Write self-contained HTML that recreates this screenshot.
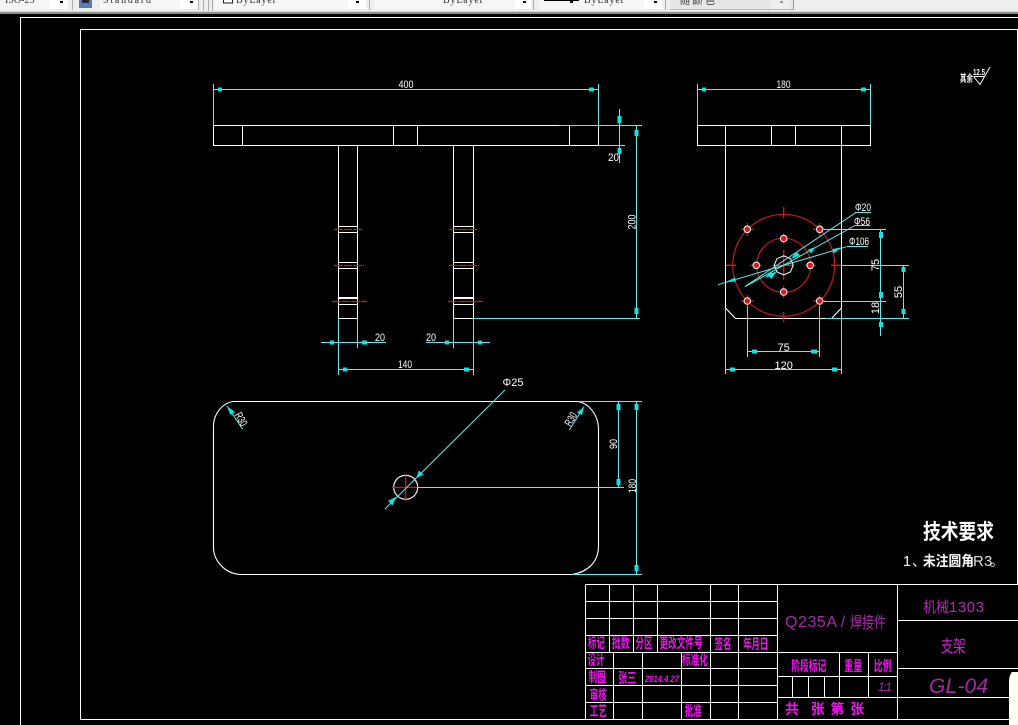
<!DOCTYPE html>
<html><head><meta charset="utf-8"><title>CAD</title>
<style>
html,body{margin:0;padding:0;background:#000;width:1018px;height:725px;overflow:hidden}
svg{display:block}
text{font-family:"Liberation Sans","WenQuanYi Zen Hei","Noto Sans CJK SC",sans-serif}
.d{fill:#fff;font-size:11px;text-anchor:middle}
.m{fill:#f014f0;text-anchor:middle;font-size:14px;font-weight:bold}
.t{fill:#a828a8;text-anchor:middle}
.b{fill:#333;font-size:10px;font-family:"Liberation Serif",serif}
</style></head><body>
<svg width="1018" height="725" viewBox="0 0 1018 725" xmlns="http://www.w3.org/2000/svg">
<rect width="1018" height="725" fill="#000"/>
<!-- toolbar -->
<g shape-rendering="crispEdges">
<rect width="1018" height="12" fill="#eeeeec"/>
<rect y="11" width="1018" height="1" fill="#d8d8d8"/>
<rect y="12" width="1018" height="2" fill="#8e8e8e"/>
<rect x="0" y="0" width="68" height="9" fill="#f6f6f6"/>
<rect x="50" y="0" width="18" height="9" fill="#fff"/>
<rect x="72" y="0" width="1" height="10" fill="#aaa"/>
<rect x="79" y="0" width="13" height="8" fill="#5c7cb8"/><rect x="82" y="0" width="7" height="3" fill="#223"/>
<rect x="100" y="0" width="98" height="9" fill="#f6f6f6"/><rect x="180" y="0" width="18" height="9" fill="#fff"/>
<rect x="198" y="0" width="1" height="10" fill="#aaa"/>
<rect x="203" y="0" width="1" height="11" fill="#aaa"/><rect x="208" y="0" width="1" height="11" fill="#aaa"/><rect x="212" y="0" width="1" height="11" fill="#aaa"/>
<rect x="214" y="0" width="152" height="9" fill="#f6f6f6"/><rect x="348" y="0" width="18" height="9" fill="#fff"/>
<rect x="223.5" y="-2" width="9" height="5" fill="#fff" stroke="#222"/>
<rect x="369" y="0" width="1" height="10" fill="#aaa"/>
<rect x="374" y="0" width="157" height="9" fill="#f6f6f6"/><rect x="515" y="0" width="16" height="9" fill="#fff"/>
<rect x="533" y="0" width="1" height="10" fill="#aaa"/>
<rect x="539" y="0" width="123" height="9" fill="#f6f6f6"/><rect x="644" y="0" width="18" height="9" fill="#fff"/>
<rect x="544" y="0" width="35" height="1" fill="#000"/>
<rect x="665" y="0" width="1" height="10" fill="#aaa"/>
<rect x="671" y="0" width="122" height="9" fill="#e6e6e6"/><rect x="770" y="0" width="20" height="9" fill="#eeeeee"/>
<rect x="670" y="9" width="124" height="1" fill="#b8b8b8"/><rect x="793" y="0" width="1" height="10" fill="#999"/>
<rect x="60" y="1" width="3" height="2" fill="#111"/><rect x="570" y="1" width="3" height="2" fill="#111"/>
<rect x="190" y="1" width="3" height="2" fill="#111"/><rect x="356" y="1" width="3" height="2" fill="#111"/>
<rect x="523" y="1" width="3" height="2" fill="#111"/><rect x="654" y="1" width="3" height="2" fill="#111"/>
<rect x="780" y="1" width="3" height="2" fill="#999"/>
</g>
<text class="b" x="5" y="3">ISO-25</text>
<text class="b" x="103" y="3" textLength="48">Standard</text>
<text class="b" x="236" y="3" textLength="40">ByLayer</text>
<text class="b" x="443" y="3" textLength="40">ByLayer</text>
<text class="b" x="584" y="3" textLength="40">ByLayer</text>
<text class="b" x="680" y="4" fill="#555" textLength="35" style="font-family:'WenQuanYi Zen Hei',sans-serif">随颜色</text>

<!-- white geometry -->
<g fill="none" stroke="#fff" stroke-width="1" shape-rendering="crispEdges">
<path d="M20.5 17V725M20 17.5H1018"/>
<path d="M80.5 719.5V29.5H1017.5V584M80.5 719.5H1009"/>
<rect x="213.5" y="125.5" width="385" height="20"/>
<path d="M242.5 125V145M393.5 125V145M417.5 125V145M569.5 125V145"/>
<path d="M338.5 145V318.5H357.5V145M453.5 145V318.5H473.5V145"/>
<path d="M338 226.5H358M338 232.5H358M338 262.5H358M338 268.5H358M338 297.5H358M338 298.5H358M338 304.5H358"/>
<path d="M453 226.5H474M453 232.5H474M453 262.5H474M453 268.5H474M453 297.5H474M453 298.5H474M453 304.5H474"/>
<rect x="697.5" y="125.5" width="173" height="20"/>
<path d="M725.5 125V308M771.5 125V145M795.5 125V145M841.5 125V308M735 318.5H825"/>
<!-- title block -->
<path d="M585.5 584.5H1018M585.5 584.5V719M585.5 601.5H777M585.5 618.5H777M585.5 635.5H777M585.5 652.5H897M585.5 668.5H777M585.5 685.5H777M585.5 702.5H777"/>
<path d="M609.5 584V652M633.5 584V652M657.5 584V652M710.5 584V719M738.5 584V719M777.5 584V719M613.5 652V719M642.5 652V719M681.5 652V719"/>
<path d="M897.5 584V719M897 620.5H1018M897 668.5H1018M777 676.5H897M777 697.5H1009M839.5 652V697M868.5 652V697M792.5 676V697M808.5 676V697M824.5 676V697"/>
</g>
<g fill="none" stroke="#fff" stroke-width="1.1">
<path d="M725.5 308L735 318M832 318L841.5 308"/>
<path d="M233 401.5H578C588 403 598 414 598.5 428V547C598 562 588 572 572 574.5H241C226 574 214 562 213.5 548V425C214 414 222 403 233 401.5Z"/>
<circle cx="405.7" cy="487.3" r="12"/>
</g>
<!-- red -->
<g fill="none" stroke="#c01c1c" stroke-width="1.2">
<path d="M334 229.5H362M449 229.5H478M334 265.5H364M449 265.5H479M332 301.5H367M448 301.5H483" stroke-dasharray="9 1 8 1" stroke="#c02020" stroke-width="1.3"/>
<circle cx="783.7" cy="265.3" r="51"/>
<circle cx="783.7" cy="265.3" r="27"/>
<path d="M726 265.3H736M831 265.3H841.5M783.7 207V218M783.7 312V322M773 265.3H794M783.7 250V280" stroke-width="1.3" stroke="#e01818"/>
<path d="M783.7 233V244M783.7 286V298M750 265.3H762M805 265.3H816M741 229.3H754M747.3 223V236M813 229.3H826M819.7 223V236M741 301H754M747.3 295V308M813 301H826M819.7 295V308" stroke="#c81818"/>
<path d="M392 487.3H419M405.7 474V501" stroke="#e01818"/>
</g>
<g fill="#d81c1c" stroke="#fff" stroke-width="1">
<circle cx="783.7" cy="238.5" r="3.3"/><circle cx="783.7" cy="292" r="3.3"/>
<circle cx="756.3" cy="265.3" r="3.3"/><circle cx="810.3" cy="265.3" r="3.3"/>
<circle cx="747.3" cy="229.3" r="3.3"/><circle cx="819.7" cy="229.3" r="3.3"/>
<circle cx="747.3" cy="301" r="3.3"/><circle cx="819.7" cy="301" r="3.3"/>
</g>
<polygon points="774.2,265.3 777,258.6 783.7,255.8 790.4,258.6 793.2,265.3 790.4,272 783.7,274.8 777,272" fill="none" stroke="#fff"/>
<!-- cyan lines -->
<g fill="none" stroke="#60eaea" stroke-width="1" shape-rendering="crispEdges">
<path d="M213.5 84V125M598.5 84V125M213 89.5H599"/>
<path d="M697.5 84V125M870.5 84V125M697 89.5H871"/>
<path d="M619.5 109V163M559 125.5H642M598 145.5H625M636.5 125V318M473 318.5H640"/>
<path d="M338.5 318V375M357.5 318V348M453.5 318V348M473.5 318V375M321 342.5H386M426 342.5H490M338 369.5H474"/>
<path d="M725.5 308V374M841.5 308V374M747.5 306V357M819.5 306V357M725 369.5H842M747 351.5H820"/>
<path d="M824 229.5H886M824 301.5H886M841 265.5H909M825 318.5H909M880.5 229V336M903.5 265V318"/>
<path d="M578 401.5H642M572 574.5H642M417 487.5H624M618.5 401V487M636.5 401V574"/>
<path d="M855 212.5H871M855 225.5H870M847 246.5H868"/>
</g>
<g fill="none" stroke="#60eaea" stroke-width="1">
<path d="M855.7 212.7L745 286.5"/>
<path d="M855 225.5L745 286.7"/>
<path d="M846.7 246.7L718 284.7"/>
<path d="M505 390L385 509"/>
<path d="M227 406L242.7 429.3"/>
<path d="M584 406.7L569.3 430"/>
</g>
<!-- cyan arrows -->
<g fill="#10e4e4" shape-rendering="crispEdges">
<rect x="218" y="87.5" width="4" height="4"/><rect x="589" y="87.5" width="5" height="4"/>
<rect x="702" y="87.5" width="4" height="4"/><rect x="861" y="87.5" width="5" height="4"/>
<rect x="617.5" y="116" width="4" height="7"/><rect x="617.5" y="148" width="4" height="6"/>
<rect x="634.5" y="130" width="4" height="6"/><rect x="634.5" y="308" width="4" height="6"/>
<rect x="330" y="340.5" width="4" height="4"/><rect x="362" y="340.5" width="5" height="4"/>
<rect x="445" y="340.5" width="4" height="4"/><rect x="478" y="340.5" width="4" height="4"/>
<rect x="343" y="367.5" width="4" height="4"/><rect x="464" y="367.5" width="5" height="4"/>
<rect x="752" y="349.5" width="5" height="4"/><rect x="811" y="349.5" width="6" height="4"/>
<rect x="730" y="367.5" width="5" height="4"/><rect x="832" y="367.5" width="5" height="4"/>
<rect x="879" y="232" width="4" height="6"/><rect x="879" y="292" width="4" height="6"/><rect x="879" y="322" width="4" height="5"/>
<rect x="901.5" y="267" width="4" height="5"/><rect x="901.5" y="309" width="4" height="5"/>
<rect x="616.5" y="404" width="4" height="6"/><rect x="616.5" y="479" width="4" height="6"/>
<rect x="634.5" y="404" width="4" height="6"/><rect x="634.5" y="565" width="4" height="6"/>
</g>
<g fill="#10e4e4">
<polygon points="841.7,247.3 832.5,249 833.5,253.5"/>
<polygon points="725,282.3 735,277.5 736,281.5"/>
<polygon points="816,246.7 808,249.5 811,253.5"/>
<polygon points="765,277.7 771,271.5 774,275"/>
<polygon points="790.7,259 796.5,251.5 800,255.5"/>
<polygon points="777,271 768,275 771.5,279"/>
<polygon points="416,478.3 419,470.5 423.5,474.5"/>
<polygon points="396,496.7 388,501 392.5,505.5"/>
<polygon points="226.7,405.7 235,412 230.5,415"/>
<polygon points="584,406.7 582,415 577,412.5"/>
</g>
<!-- dim text -->
<text class="d" x="406" y="88" textLength="15" lengthAdjust="spacingAndGlyphs">400</text>
<text class="d" x="783.5" y="88" textLength="14" lengthAdjust="spacingAndGlyphs">180</text>
<text class="d" x="613.5" y="161" textLength="11" lengthAdjust="spacingAndGlyphs">20</text>
<text class="d" transform="translate(635.5 222) rotate(-90)" textLength="15" lengthAdjust="spacingAndGlyphs">200</text>
<text class="d" x="380" y="341" textLength="10" lengthAdjust="spacingAndGlyphs">20</text>
<text class="d" x="431" y="341" textLength="10" lengthAdjust="spacingAndGlyphs">20</text>
<text class="d" x="405" y="368" textLength="14" lengthAdjust="spacingAndGlyphs">140</text>
<text class="d" x="783.7" y="351">75</text>
<text class="d" x="783.7" y="369">120</text>
<text class="d" x="863" y="211" textLength="16" lengthAdjust="spacingAndGlyphs">&#934;20</text>
<text class="d" x="862" y="225" textLength="16" lengthAdjust="spacingAndGlyphs">&#934;56</text>
<text class="d" x="859" y="245" textLength="20" lengthAdjust="spacingAndGlyphs">&#934;106</text>
<text class="d" transform="translate(879 265) rotate(-90)">75</text>
<text class="d" transform="translate(879 308) rotate(-90)">18</text>
<text class="d" transform="translate(902 292) rotate(-90)">55</text>
<text class="d" x="513" y="386">&#934;25</text>
<text class="d" transform="translate(617 444) rotate(-90)" textLength="10" lengthAdjust="spacingAndGlyphs">90</text>
<text class="d" transform="translate(636 486) rotate(-90)" textLength="14" lengthAdjust="spacingAndGlyphs">180</text>
<text class="d" transform="translate(238 421) rotate(60)" textLength="14" lengthAdjust="spacingAndGlyphs">R30</text>
<text class="d" transform="translate(574 421) rotate(-60)" textLength="14" lengthAdjust="spacingAndGlyphs">R30</text>
<!-- surface mark -->
<text x="960" y="82" fill="#fff" font-size="10" font-weight="bold" textLength="13" lengthAdjust="spacingAndGlyphs">其余</text>
<text x="973" y="75" fill="#fff" font-size="8" font-weight="bold" textLength="12" lengthAdjust="spacingAndGlyphs">12.5</text>
<path d="M973.5 76.5H985M974 77L980 84.5L990 67" fill="none" stroke="#fff" stroke-width="1"/>
<!-- requirements -->
<text x="958.5" y="539" fill="#fff" font-size="21" font-weight="bold" text-anchor="middle" textLength="71" lengthAdjust="spacingAndGlyphs">技术要求</text>
<text x="903" y="566" fill="#fff" font-size="15" textLength="8" lengthAdjust="spacingAndGlyphs">1</text>
<text x="912" y="566" fill="#fff" font-size="14" style="font-family:'Noto Sans CJK SC',sans-serif">、</text>
<text x="923" y="566" fill="#fff" font-size="14" font-weight="bold" textLength="51" lengthAdjust="spacingAndGlyphs">未注圆角</text>
<text x="973" y="566" fill="#ddd" font-size="15">R</text>
<text x="984" y="566" fill="#ddd" font-size="15">3</text>
<text x="990" y="566" fill="#ddd" font-size="14" style="font-family:'Noto Sans CJK SC',sans-serif">。</text>
<!-- title text -->
<text class="m" x="596.5" y="648" textLength="17" lengthAdjust="spacingAndGlyphs">标记</text>
<text class="m" x="620.7" y="648" textLength="18" lengthAdjust="spacingAndGlyphs">批数</text>
<text class="m" x="644" y="648" textLength="17" lengthAdjust="spacingAndGlyphs">分区</text>
<text class="m" x="681" y="648" textLength="43" lengthAdjust="spacingAndGlyphs">更改文件号</text>
<text class="m" x="723" y="649" textLength="17" lengthAdjust="spacingAndGlyphs">签名</text>
<text class="m" x="755.7" y="649" textLength="25" lengthAdjust="spacingAndGlyphs">年月日</text>
<text class="m" x="596" y="665" textLength="17" lengthAdjust="spacingAndGlyphs">设计</text>
<text class="m" x="695" y="665" textLength="26" lengthAdjust="spacingAndGlyphs">标准化</text>
<text class="m" x="597.3" y="682" textLength="17" lengthAdjust="spacingAndGlyphs">制图</text>
<text class="m" x="627.3" y="683" textLength="18" lengthAdjust="spacingAndGlyphs">张三</text>
<text class="m" x="662" y="682" style="font-size:9px" font-style="italic" textLength="34" lengthAdjust="spacingAndGlyphs">2014.4.27</text>
<text class="m" x="598.3" y="700" textLength="17" lengthAdjust="spacingAndGlyphs">审核</text>
<text class="m" x="598.3" y="716" textLength="17" lengthAdjust="spacingAndGlyphs">工艺</text>
<text class="m" x="693.3" y="716" textLength="17" lengthAdjust="spacingAndGlyphs">批准</text>
<text class="t" x="785" y="627" style="text-anchor:start" font-size="16" textLength="52">Q235A</text>
<text class="t" x="843" y="627" font-size="16">/</text>
<text class="t" x="850" y="628" style="text-anchor:start" font-size="16" textLength="36" lengthAdjust="spacingAndGlyphs">焊接件</text>
<text class="t" x="923" y="612" style="text-anchor:start;fill:#b828b8" font-size="15" textLength="26" lengthAdjust="spacingAndGlyphs">机械</text>
<text class="t" x="949" y="612" style="text-anchor:start;fill:#b828b8" font-size="15" textLength="35">1303</text>
<text class="t" x="953.3" y="652" font-size="17" textLength="25" lengthAdjust="spacingAndGlyphs" style="fill:#c828c8">支架</text>
<text class="m" x="808.7" y="671" textLength="35" lengthAdjust="spacingAndGlyphs">阶段标记</text>
<text class="m" x="853.3" y="671" textLength="18" lengthAdjust="spacingAndGlyphs">重量</text>
<text class="m" x="882.7" y="671" textLength="18" lengthAdjust="spacingAndGlyphs">比例</text>
<text class="t" x="885" y="691" font-size="12" font-style="italic" textLength="14">1:1</text>
<text class="t" x="929" y="693" style="text-anchor:start" font-size="21" font-style="italic" textLength="59">GL-04</text>
<text class="m" x="792" y="714">共</text><text class="m" x="817.7" y="714">张</text>
<text class="m" x="837.3" y="714">第</text><text class="m" x="857.3" y="714">张</text>
<!-- tooltip corner -->
<path d="M1018 672H1012C1010 674 1009 678 1009 682V725H1018Z" fill="#fffff0"/>
</svg>
</body></html>
